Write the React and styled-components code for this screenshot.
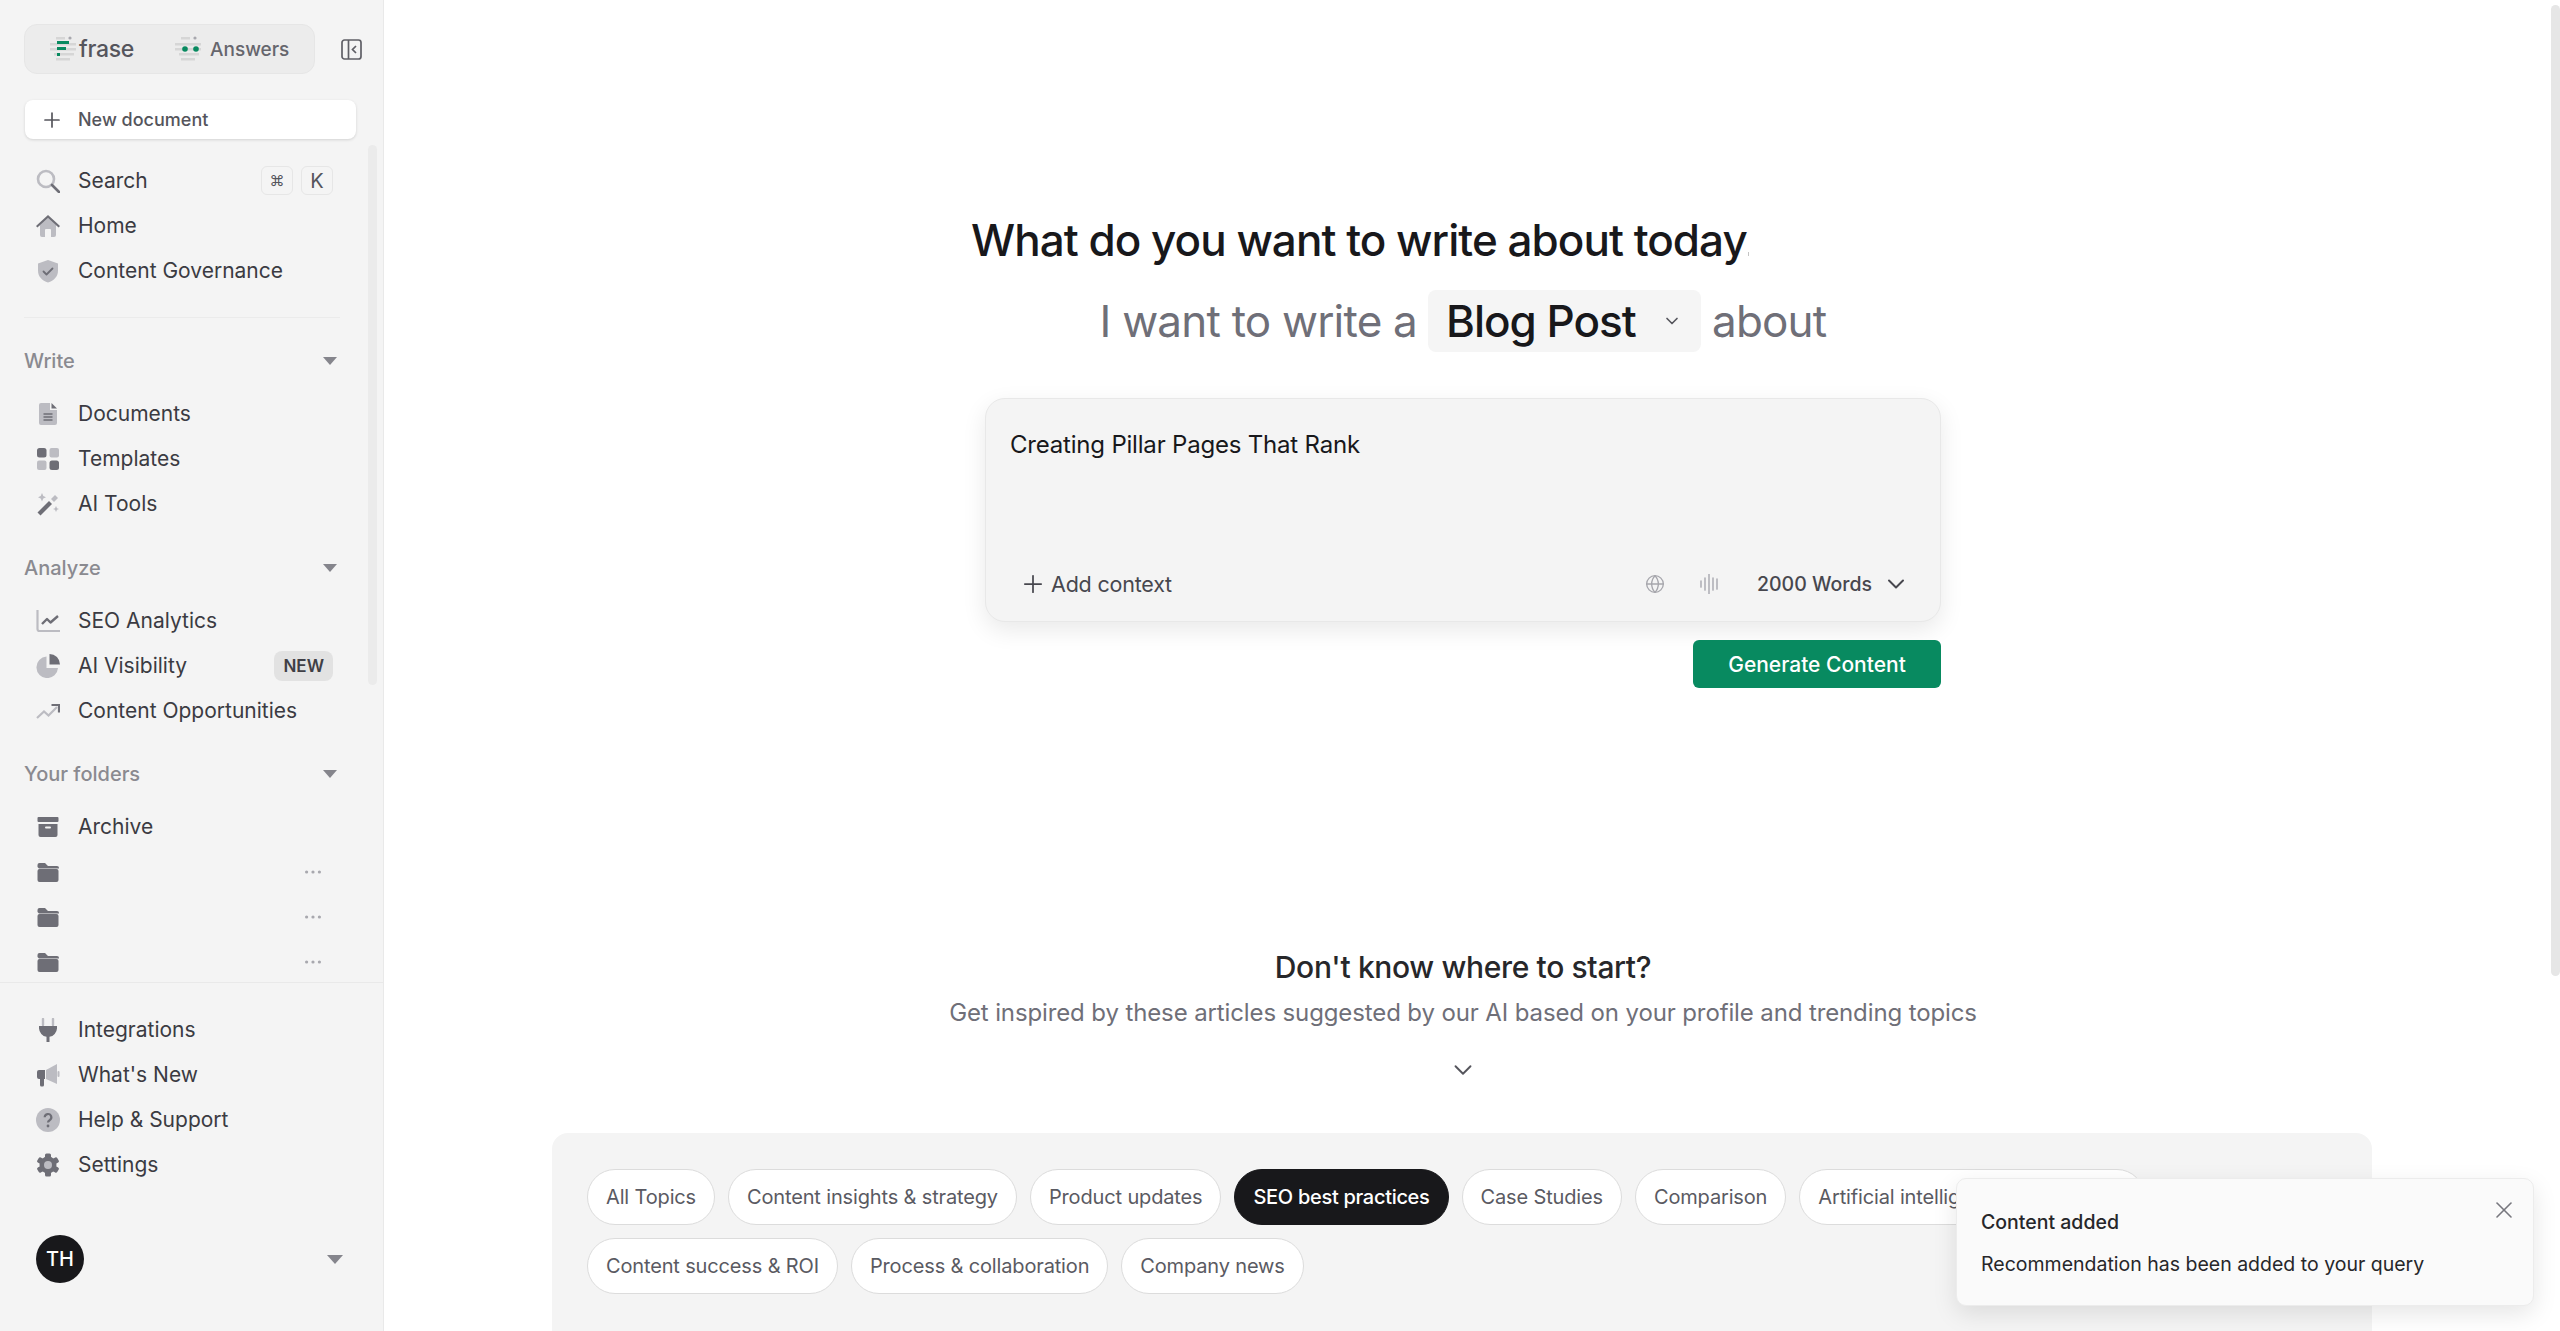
import React from "react";
import styled, { createGlobalStyle } from "styled-components";
import { ChevronDown, Globe, Plus, X } from "lucide-react";

const DARK = "#6e6e76";
const LIGHT = "#bcbcc2";

const GlobalStyle = createGlobalStyle`
  html, body {
    margin: 0;
    height: 100%;
    overflow: hidden;
    background: #ffffff;
    font-family: Inter, "Liberation Sans", sans-serif;
  }
  * { box-sizing: border-box; }
`;

const Page = styled.div`
  display: flex;
  width: 2560px;
  height: 1331px;
  overflow: hidden;
  position: relative;
`;

/* sidebar */
const Sidebar = styled.aside`
  position: relative;
  flex: 0 0 384px;
  display: flex;
  flex-direction: column;
  height: 100%;
  padding-top: 24px;
  background: #f4f4f4;
  border-right: 1px solid #e9e9e9;
`;
const TopRow = styled.div`
  display: flex;
  align-items: center;
  padding-left: 24px;
  gap: 26px;
`;
const Tabs = styled.div`
  display: flex;
  align-items: center;
  width: 291px;
  height: 50px;
  padding-left: 25px;
  background: #ececec;
  border: 1px solid #e6e6e6;
  border-radius: 13px;
`;
const Tab = styled.div`
  display: flex;
  align-items: center;
  gap: ${(p) => (p.$brand ? "3px" : "9px")};
  width: ${(p) => (p.$brand ? "125px" : "auto")};
  color: ${(p) => (p.$brand ? "#55555c" : "#66666d")};
  font-size: ${(p) => (p.$brand ? "23px" : "19px")};
  letter-spacing: ${(p) => (p.$brand ? "-0.3px" : "0")};
  font-weight: 500;
`;
const NewDoc = styled.div`
  display: flex;
  align-items: center;
  gap: 14px;
  width: 331px;
  height: 39px;
  margin: 26px 0 0 25px;
  padding-left: 15px;
  background: #ffffff;
  border-radius: 8px;
  box-shadow: 0 1px 3px rgba(0, 0, 0, 0.14);
  color: #55555c;
  font-size: 18px;
  font-weight: 500;
`;
const NavScroll = styled.div`
  flex: 0 0 844px;
  padding-top: 19px;
  overflow: hidden;
  border-bottom: 1px solid #e9e9e9;
`;
const Row = styled.div`
  display: flex;
  align-items: center;
  gap: 18px;
  height: 45px;
  padding: 0 50px 0 36px;
  color: #3b3b42;
  font-size: 21px;
`;
const RowIcon = styled.span`
  flex: 0 0 24px;
  display: flex;
  width: 24px;
  height: 24px;
`;
const RowEnd = styled.span`
  display: flex;
  align-items: center;
  gap: 8px;
  margin-left: auto;
`;
const Key = styled.span`
  display: flex;
  align-items: center;
  justify-content: center;
  width: 32px;
  height: 29px;
  border: 1px solid #e6e6e6;
  border-radius: 6px;
  color: #55555c;
  font-size: ${(p) => (p.$small ? "15px" : "20px")};
`;
const Badge = styled.span`
  padding: 0 9px;
  height: 30px;
  line-height: 30px;
  border-radius: 8px;
  background: #e2e2e2;
  color: #3f3f46;
  font-size: 17px;
  font-weight: 600;
`;
const Divider = styled.div`
  width: 316px;
  height: 1px;
  margin: 24px 0 0 24px;
  background: #ebebeb;
`;
const SectionHead = styled.div`
  display: flex;
  align-items: center;
  justify-content: space-between;
  height: 30px;
  margin: ${(p) => p.$top}px 46px 15px 24px;
  color: #8a8a90;
  font-size: 20px;
  font-weight: 500;
`;
const Caret = styled.span`
  width: 0;
  height: 0;
  border-left: ${(p) => (p.$big ? 8 : 7)}px solid transparent;
  border-right: ${(p) => (p.$big ? 8 : 7)}px solid transparent;
  border-top: ${(p) => (p.$big ? 9 : 8)}px solid #85858c;
`;
const SideFooter = styled.div`
  padding-top: 24px;
`;
const UserRow = styled.div`
  display: flex;
  align-items: center;
  justify-content: space-between;
  margin-top: 48px;
  padding: 0 40px 0 36px;
`;
const Avatar = styled.div`
  display: flex;
  align-items: center;
  justify-content: center;
  width: 48px;
  height: 48px;
  border-radius: 50%;
  background: #18181b;
  color: #ffffff;
  font-size: 20px;
  font-weight: 500;
`;
const ScrollThumb = styled.div`
  position: absolute;
  top: ${(p) => p.$top}px;
  height: ${(p) => p.$height}px;
  right: ${(p) => p.$right}px;
  width: 9px;
  border-radius: 5px;
  background: ${(p) => p.$color};
`;

/* main */
const Main = styled.main`
  flex: 1;
  display: flex;
  flex-direction: column;
  align-items: center;
  padding: 212px 18px 0 0;
  & > * {
    flex-shrink: 0;
  }
`;
const Heading = styled.h1`
  width: 984px;
  margin: 0;
  color: #18181b;
  font-size: 44px;
  font-weight: 500;
  line-height: 56px;
  letter-spacing: -0.97px;
  span {
    display: inline-block;
    width: 1px;
    height: 4px;
    margin-left: 1px;
    background: #c4c4c4;
  }
`;
const PromptLine = styled.div`
  display: flex;
  align-items: center;
  gap: 11px;
  margin-top: 22px;
  color: #6f6f78;
  font-size: 44px;
  letter-spacing: -0.8px;
`;
const TypeSelect = styled.div`
  display: flex;
  align-items: center;
  justify-content: space-between;
  width: 273px;
  height: 62px;
  padding: 0 19px 0 18px;
  background: #f5f5f5;
  border-radius: 8px;
  color: #18181b;
  font-weight: 500;
  letter-spacing: -1px;
`;
const Composer = styled.div`
  display: flex;
  flex-direction: column;
  justify-content: space-between;
  width: 956px;
  height: 224px;
  margin-top: 46px;
  padding: 30px 30px 19px 24px;
  background: #f4f4f4;
  border: 1px solid #e8e8e8;
  border-radius: 20px;
  box-shadow: 0 8px 24px rgba(0, 0, 0, 0.09);
`;
const Query = styled.div`
  color: #18181b;
  font-size: 24px;
  line-height: 32px;
  letter-spacing: -0.2px;
`;
const ComposerBar = styled.div`
  display: flex;
  align-items: center;
  height: 36px;
  padding-left: 9px;
  color: #47474e;
  font-size: 21.5px;
`;
const AddContext = styled.div`
  display: flex;
  align-items: center;
  gap: 4px;
  margin-right: auto;
  letter-spacing: -0.2px;
`;
const BarIcon = styled.div`
  display: flex;
  align-items: center;
  margin-left: ${(p) => p.$gap || 0}px;
`;
const WordCount = styled.div`
  display: flex;
  align-items: center;
  gap: 10px;
  margin-left: 38px;
  font-weight: 500;
  font-size: 19.5px;
`;
const ActionRow = styled.div`
  display: flex;
  justify-content: flex-end;
  width: 956px;
  margin-top: 18px;
`;
const Generate = styled.button`
  width: 248px;
  height: 48px;
  padding: 0;
  border: none;
  border-radius: 6px;
  background: #088a60;
  color: #ffffff;
  font-family: inherit;
  font-size: 21px;
  font-weight: 500;
`;
const StartTitle = styled.h2`
  margin: 259px 0 0;
  color: #27272a;
  font-size: 30px;
  font-weight: 500;
  line-height: 40px;
  letter-spacing: -0.35px;
`;
const StartText = styled.p`
  margin: 8px 0 0;
  color: #6f6f78;
  font-size: 24px;
  line-height: 36px;
  letter-spacing: -0.12px;
`;
const Expand = styled.div`
  display: flex;
  margin-top: 24px;
  color: #55555c;
`;
const TopicPanel = styled.section`
  display: flex;
  flex-wrap: wrap;
  align-content: flex-start;
  gap: 13px 13px;
  width: 1820px;
  height: 300px;
  margin: 48px 0 0 -2px;
  padding: 36px 35px;
  background: #f4f4f4;
  border-radius: 16px;
`;
const Chip = styled.div`
  display: flex;
  align-items: center;
  height: 56px;
  padding: 0 18px;
  background: ${(p) => (p.$active ? "#18181b" : "#ffffff")};
  border: 1px solid ${(p) => (p.$active ? "#18181b" : "#dcdcdc")};
  border-radius: 28px;
  color: ${(p) => (p.$active ? "#ffffff" : "#5a5a62")};
  font-size: 20px;
  letter-spacing: ${(p) => (p.$active ? "-0.3px" : "-0.15px")};
  font-weight: ${(p) => (p.$active ? 500 : 400)};
  white-space: nowrap;
`;
const Toast = styled.div`
  position: absolute;
  left: 1956px;
  top: 1178px;
  width: 578px;
  height: 128px;
  padding: 27px 24px;
  background: #fafafa;
  border: 1px solid #ececec;
  border-radius: 10px;
  box-shadow: 0 8px 24px rgba(0, 0, 0, 0.1);
  color: #27272a;
  font-size: 19.5px;
  line-height: 32px;
`;
const ToastTitle = styled.div`
  font-weight: 500;
  margin-bottom: 10px;
`;
const ToastClose = styled.span`
  position: absolute;
  top: 17px;
  right: 15px;
  display: flex;
  color: #77777e;
`;

/* drawn icons */
const Svg = ({ children, size = 24, vb = "0 0 24 24", height }) => (
  <svg width={size} height={height || size} viewBox={vb} fill="none">
    {children}
  </svg>
);

const SearchIcon = () => (
  <Svg>
    <circle cx="10" cy="10" r="8" stroke={LIGHT} strokeWidth="2.6" />
    <path d="M16 16l7 7" stroke={DARK} strokeWidth="2.6" strokeLinecap="round" />
  </Svg>
);
const HomeIcon = () => (
  <Svg>
    <path d="M4 11v10a2 2 0 0 0 2 2h3v-7a1 1 0 0 1 1-1h4a1 1 0 0 1 1 1v7h3a2 2 0 0 0 2-2V11l-8-7z" fill={LIGHT} />
    <path d="M12 1L24 12l-1.4 1.5L12 4 1.4 13.500 0 12z" fill={DARK} />
  </Svg>
);
const ShieldIcon = () => (
  <Svg>
    <path d="M12 1l10 3.500v7c0 6-4 10-10 12C6 21.500 2 17.500 2 11.500v-7z" fill={LIGHT} />
    <path d="M7.500 12.500l3 3 6-6" stroke={DARK} strokeWidth="1.800" strokeLinecap="round" strokeLinejoin="round" />
  </Svg>
);
const DocIcon = () => (
  <Svg>
    <path d="M3 3a2 2 0 0 1 2-2h9v7h7v13a2 2 0 0 1-2 2H5a2 2 0 0 1-2-2z" fill={LIGHT} />
    <path d="M15.500 1L21 6.500h-5.500z" fill={DARK} />
    <path d="M7.500 12h9M7.500 15h9M7.500 18h9" stroke={DARK} strokeWidth="1.300" />
  </Svg>
);
const GridIcon = () => (
  <Svg>
    <rect x="1" y="1" width="9.500" height="9.500" rx="2.500" fill={DARK} />
    <rect x="13.500" y="1" width="9.500" height="9.500" rx="2" fill={LIGHT} />
    <rect x="1" y="13.500" width="9.500" height="9.500" rx="2" fill={LIGHT} />
    <rect x="13.500" y="13.500" width="9.500" height="9.500" rx="2.500" fill={DARK} />
  </Svg>
);
const WandIcon = () => (
  <Svg>
    <path d="M1.500 20.500L13 9l3 3L4.500 23.500z" fill={DARK} />
    <path d="M15 7l4-4 3 3-4 4z" fill={LIGHT} />
    <path d="M6 1l1.300 3L10 5.300 7.300 6.500 6 9.500 4.700 6.500 2 5.300 4.700 4zM20 14l1 2.200 2 .800-2 .800-1 2.200-1-2.200-2-.800 2-.800z" fill={LIGHT} />
  </Svg>
);
const ChartIcon = () => (
  <Svg>
    <path d="M1.500 1v19a2 2 0 0 0 2 2H24" stroke={LIGHT} strokeWidth="2.200" />
    <path d="M6 15l5-5 3.500 3.500L22 7" stroke={DARK} strokeWidth="2.400" strokeLinejoin="round" />
  </Svg>
);
const PieIcon = () => (
  <Svg>
    <path d="M10.500 2.500A10.800 10.800 0 1 0 22 14H10.500z" fill={LIGHT} />
    <path d="M13.500 0A10.500 10.500 0 0 1 24 10.500H13.500z" fill={DARK} />
  </Svg>
);
const TrendIcon = () => (
  <Svg>
    <path d="M1 19l7-6.500 4.500 4L21 8" stroke={LIGHT} strokeWidth="2.200" />
    <path d="M15.500 6H23v7.500" stroke={DARK} strokeWidth="2.200" />
  </Svg>
);
const ArchiveIcon = () => (
  <Svg>
    <rect x="1.500" y="2" width="21" height="5" rx="1" fill={DARK} />
    <path d="M2.500 9h19v11a2 2 0 0 1-2 2h-15a2 2 0 0 1-2-2z" fill={DARK} />
    <rect x="9" y="11.500" width="6" height="2" rx="1" fill="#f4f4f4" />
  </Svg>
);
const FolderIcon = () => (
  <Svg>
    <path d="M1.500 7V5a2 2 0 0 1 2-2h5.500l3 3h9a2 2 0 0 1 2 2v.500H3z" fill={DARK} />
    <path d="M1.500 11a2 2 0 0 1 2-2h17a2 2 0 0 1 2 2v9a2 2 0 0 1-2 2h-17a2 2 0 0 1-2-2z" fill={DARK} />
  </Svg>
);
const MoreDots = () => (
  <Svg size={28} height={4} vb="0 0 28 4">
    <circle cx="1.600" cy="2" r="1.600" fill="#a8a8ae" />
    <circle cx="8" cy="2" r="1.600" fill="#a8a8ae" />
    <circle cx="14.400" cy="2" r="1.600" fill="#a8a8ae" />
  </Svg>
);
const PlugIcon = () => (
  <Svg>
    <path d="M7 1v6M17 1v6" stroke={LIGHT} strokeWidth="2.400" strokeLinecap="round" />
    <path d="M3 8h18v2.500a9 9 0 0 1-7.500 8.300V24h-3v-5.200A9 9 0 0 1 3 10.500z" fill={DARK} />
  </Svg>
);
const MegaphoneIcon = () => (
  <Svg>
    <path d="M10 7l11-6v20l-11-5z" fill={LIGHT} />
    <rect x="21.500" y="8" width="2" height="6" rx="1" fill={LIGHT} />
    <path d="M1 9a2 2 0 0 1 2-2h6v9H8v6a1.500 1.500 0 0 1-1.500 1.500h-1A1.500 1.500 0 0 1 4 22v-6H3a2 2 0 0 1-2-2z" fill={DARK} />
  </Svg>
);
const HelpIcon = () => (
  <Svg>
    <circle cx="12" cy="12" r="12" fill={LIGHT} />
    <path d="M8.700 9.300a3.300 3.300 0 1 1 4.900 2.900c-1 .6-1.600 1.200-1.600 2.300" stroke={DARK} strokeWidth="2.200" />
    <circle cx="12" cy="18" r="1.400" fill={DARK} />
  </Svg>
);
const GearIcon = () => (
  <Svg>
    {[0, 60, 120, 180, 240, 300].map((deg) => (
      <rect key={deg} x="9" y="0.500" width="6" height="6" rx="1.500" fill={DARK} transform={`rotate(${deg} 12 12)`} />
    ))}
    <circle cx="12" cy="12" r="8.500" fill={DARK} />
    <circle cx="12" cy="12" r="4" fill={LIGHT} />
  </Svg>
);
const FraseLogo = ({ answers }) => (
  <Svg size={26} vb="0 0 26 26">
    <g fill="#d6d6d6">
      <rect x="6" y="1" width="9" height="2.500" />
      <rect x="0" y="7" width="26" height="2.500" />
      <rect x="0" y="12" width="26" height="2.500" />
      <rect x="4" y="17" width="20" height="2.500" />
      <rect x="6" y="22" width="14" height="2.500" />
    </g>
    <circle cx="20" cy="2" r="1.600" fill="#a8a8ae" />
    {answers ? (
      <>
        <circle cx="10" cy="13" r="2.800" fill="#088a60" />
        <circle cx="21" cy="13" r="2.800" fill="#088a60" />
      </>
    ) : (
      <>
        <rect x="7" y="5" width="12" height="3" fill="#088a60" />
        <rect x="7" y="11" width="9" height="3" fill="#088a60" />
        <rect x="7" y="17" width="3" height="3" fill="#088a60" />
      </>
    )}
  </Svg>
);
const CollapseIcon = () => (
  <Svg size={21} vb="0 0 21 21">
    <rect x="1" y="1" width="19" height="19" rx="2.500" stroke="#5f5f66" strokeWidth="1.700" />
    <path d="M7.500 1v19" stroke="#5f5f66" strokeWidth="1.700" />
    <path d="M15 7l-3.500 3.500L15 14" stroke="#5f5f66" strokeWidth="1.700" />
  </Svg>
);
const WaveIcon = () => (
  <Svg size={20} vb="0 0 20 20">
    <path d="M2 7v6M6 4v12M10 0v20M14 4v12M18 5v10" stroke="#b4b4ba" strokeWidth="1.700" strokeLinecap="round" />
  </Svg>
);

const topLinks = [
  { label: "Home", icon: <HomeIcon /> },
  { label: "Content Governance", icon: <ShieldIcon /> },
];
const writeLinks = [
  { label: "Documents", icon: <DocIcon /> },
  { label: "Templates", icon: <GridIcon /> },
  { label: "AI Tools", icon: <WandIcon /> },
];
const footerLinks = [
  { label: "Integrations", icon: <PlugIcon /> },
  { label: "What's New", icon: <MegaphoneIcon /> },
  { label: "Help & Support", icon: <HelpIcon /> },
  { label: "Settings", icon: <GearIcon /> },
];
const topics = [
  "All Topics",
  "Content insights & strategy",
  "Product updates",
  "SEO best practices",
  "Case Studies",
  "Comparison",
  "Artificial intelligence in marketing",
  "Content success & ROI",
  "Process & collaboration",
  "Company news",
];

const NavRow = ({ icon, label, children }) => (
  <Row>
    <RowIcon>{icon}</RowIcon>
    {label}
    {children && <RowEnd>{children}</RowEnd>}
  </Row>
);

export default function App() {
  return (
    <Page>
      <GlobalStyle />
      <Sidebar>
        <TopRow>
          <Tabs>
            <Tab $brand>
              <FraseLogo />
              frase
            </Tab>
            <Tab>
              <FraseLogo answers />
              Answers
            </Tab>
          </Tabs>
          <CollapseIcon />
        </TopRow>
        <NewDoc>
          <Plus size={24} strokeWidth={1.7} />
          New document
        </NewDoc>
        <NavScroll>
          <NavRow icon={<SearchIcon />} label="Search">
            <Key $small>⌘</Key>
            <Key>K</Key>
          </NavRow>
          {topLinks.map((l) => (
            <NavRow key={l.label} {...l} />
          ))}
          <Divider />
          <SectionHead $top={28}>
            Write
            <Caret />
          </SectionHead>
          {writeLinks.map((l) => (
            <NavRow key={l.label} {...l} />
          ))}
          <SectionHead $top={27}>
            Analyze
            <Caret />
          </SectionHead>
          <NavRow icon={<ChartIcon />} label="SEO Analytics" />
          <NavRow icon={<PieIcon />} label="AI Visibility">
            <Badge>NEW</Badge>
          </NavRow>
          <NavRow icon={<TrendIcon />} label="Content Opportunities" />
          <SectionHead $top={26}>
            Your folders
            <Caret />
          </SectionHead>
          <NavRow icon={<ArchiveIcon />} label="Archive" />
          {[1, 2, 3].map((n) => (
            <NavRow key={n} icon={<FolderIcon />} label="">
              <MoreDots />
            </NavRow>
          ))}
        </NavScroll>
        <SideFooter>
          {footerLinks.map((l) => (
            <NavRow key={l.label} {...l} />
          ))}
          <UserRow>
            <Avatar>TH</Avatar>
            <Caret $big />
          </UserRow>
        </SideFooter>
        <ScrollThumb $top={145} $height={540} $right={6} $color="#ebebeb" />
      </Sidebar>
      <Main>
        <Heading>
          What do you want to write about today
          <span />
        </Heading>
        <PromptLine>
          I want to write a
          <TypeSelect>
            Blog Post
            <ChevronDown size={20} strokeWidth={2} color="#55555c" />
          </TypeSelect>
          about
        </PromptLine>
        <Composer>
          <Query>Creating Pillar Pages That Rank</Query>
          <ComposerBar>
            <AddContext>
              <Plus size={28} strokeWidth={1.5} />
              Add context
            </AddContext>
            <BarIcon>
              <Globe size={20} strokeWidth={1.6} color="#a6a6ac" />
            </BarIcon>
            <BarIcon $gap={34}>
              <WaveIcon />
            </BarIcon>
            <WordCount>
              2000 Words
              <ChevronDown size={28} strokeWidth={1.7} />
            </WordCount>
          </ComposerBar>
        </Composer>
        <ActionRow>
          <Generate>Generate Content</Generate>
        </ActionRow>
        <StartTitle>Don't know where to start?</StartTitle>
        <StartText>Get inspired by these articles suggested by our AI based on your profile and trending topics</StartText>
        <Expand>
          <ChevronDown size={30} strokeWidth={1.5} />
        </Expand>
        <TopicPanel>
          {topics.map((t) => (
            <Chip key={t} $active={t === "SEO best practices"}>
              {t}
            </Chip>
          ))}
        </TopicPanel>
      </Main>
      <ScrollThumb $top={5} $height={971} $right={0} $color="#e6e6e6" />
      <Toast>
        <ToastClose>
          <X size={28} strokeWidth={1.4} />
        </ToastClose>
        <ToastTitle>Content added</ToastTitle>
        Recommendation has been added to your query
      </Toast>
    </Page>
  );
}
